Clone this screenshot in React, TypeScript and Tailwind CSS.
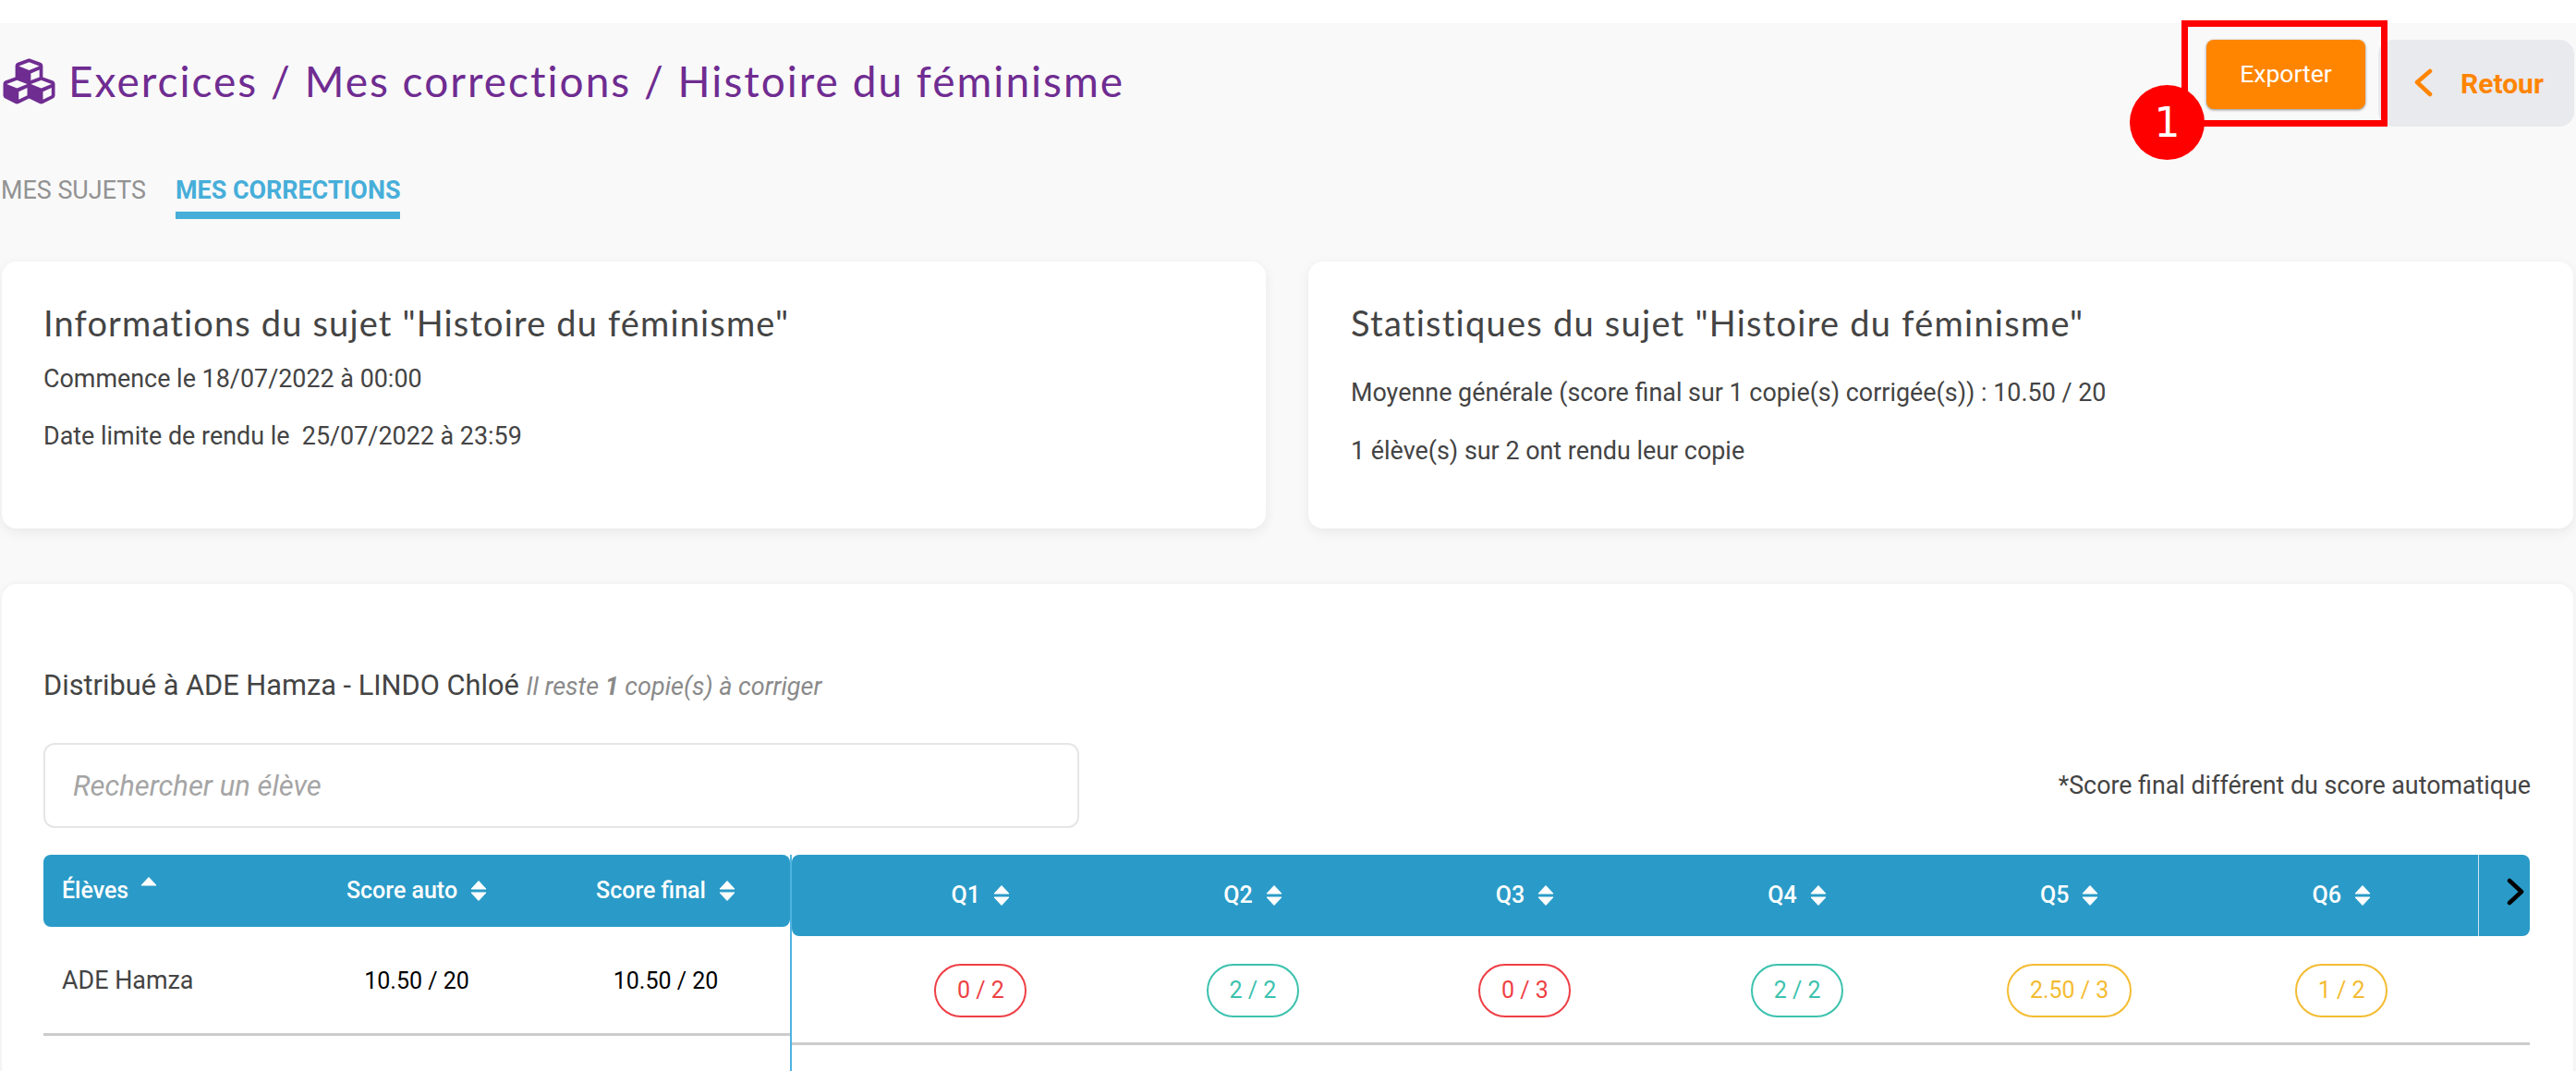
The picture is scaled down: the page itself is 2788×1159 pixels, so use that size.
import { FaCubes } from "react-icons/fa";

// One score badge per question, coloured by result
const questions = [
    { name: "Q1", score: "0 / 2", tone: "border-[#ee3f45] text-[#ee3f45]", width: "w-[100px]" },
    { name: "Q2", score: "2 / 2", tone: "border-[#3cc2ae] text-[#3cc2ae]", width: "w-[100px]" },
    { name: "Q3", score: "0 / 3", tone: "border-[#ee3f45] text-[#ee3f45]", width: "w-[100px]" },
    { name: "Q4", score: "2 / 2", tone: "border-[#3cc2ae] text-[#3cc2ae]", width: "w-[100px]" },
    { name: "Q5", score: "2.50 / 3", tone: "border-[#f4bc32] text-[#f4bc32]", width: "w-[135px]" },
    { name: "Q6", score: "1 / 2", tone: "border-[#f4bc32] text-[#f4bc32]", width: "w-[100px]" },
];

function SortIcon({ onlyUp = false }: { onlyUp?: boolean }) {
    return (
        <svg width="18" height="22" viewBox="0 0 18 22" className="ml-[14px] shrink-0 fill-white">
            <path d="M9 0.5 L17 9 L1 9 Z" stroke="white" strokeWidth="1" strokeLinejoin="round" />
            {!onlyUp && <path d="M1 13 L17 13 L9 21.5 Z" stroke="white" strokeWidth="1" strokeLinejoin="round" />}
        </svg>
    );
}

export default function App() {
    const titleFont = "font-['Lato',sans-serif]";

    return (
        <div className="relative h-[1159px] w-[2788px] overflow-hidden bg-white font-['Roboto',sans-serif] text-[26.9px] text-[#444]">
            <div className="mt-[25px] h-[1134px] bg-[#f9f9f9] pl-[2px] pr-[3px]">
                {/* Title row */}
                <div className="flex h-[135px] items-start justify-between">
                    <div className="mt-[35px] flex items-center">
                        <FaCubes className="-ml-[2px] h-[56px] w-[63px] text-[#6f2c91]" />
                        <h1 className={`ml-[11px] text-[46px] leading-[46px] tracking-[2px] text-[#6f2c91] ${titleFont}`}>
                            Exercices / Mes corrections / Histoire du féminisme
                        </h1>
                    </div>
                    <div className="mt-[18px] -mr-[1px] flex items-start">
                        <button className="flex h-[75px] w-[172px] items-center justify-center rounded-lg bg-[#ff8500] pb-[2px] text-[26.5px] text-white shadow-[0_1px_3px_rgba(0,0,0,0.45)]">
                            Exporter
                        </button>
                        <div className="ml-[14px] flex h-[94px] w-[212px] items-center rounded-2xl bg-[#e9eaee] pl-[38px]">
                            <svg width="22" height="32" viewBox="0 0 22 32" fill="none" stroke="#ff8500" strokeWidth="4.5" strokeLinecap="round" strokeLinejoin="round">
                                <path d="M18 3 L4 15 L18 28" />
                            </svg>
                            <span className="ml-[29px] text-[30px] font-bold text-[#ff8500]">Retour</span>
                        </div>
                    </div>
                </div>

                {/* Tabs */}
                <div className="-ml-[1px] flex h-[123px] items-start gap-[32px] uppercase">
                    <span className="mt-[31px] leading-[30px] text-[#929292]">Mes sujets</span>
                    <span className="mt-[31px] h-[46px] border-b-[8px] border-[#46aed9] leading-[30px] font-bold text-[#46aed9]">Mes corrections</span>
                </div>

                {/* Info cards */}
                <div className="flex gap-[46px]">
                    <div className="h-[289px] w-[1368px] rounded-2xl bg-white px-[45px] pt-[43px] shadow-[0_4px_14px_rgba(0,0,0,0.07)]">
                        <h2 className={`text-[38px] leading-[46px] tracking-[1.15px] ${titleFont}`}>Informations du sujet "Histoire du féminisme"</h2>
                        <p className="mt-[23px] leading-[30px]">Commence le 18/07/2022 à 00:00</p>
                        <p className="mt-[32px] leading-[30px] whitespace-pre">Date limite de rendu le  25/07/2022 à 23:59</p>
                    </div>
                    <div className="h-[289px] w-[1369px] rounded-2xl bg-white px-[46px] pt-[43px] shadow-[0_4px_14px_rgba(0,0,0,0.07)]">
                        <h2 className={`text-[38px] leading-[46px] tracking-[1.25px] ${titleFont}`}>Statistiques du sujet "Histoire du féminisme"</h2>
                        <p className="mt-[38px] leading-[30px]">Moyenne générale (score final sur 1 copie(s) corrigée(s)) : 10.50 / 20</p>
                        <p className="mt-[33px] leading-[30px]">1 élève(s) sur 2 ont rendu leur copie</p>
                    </div>
                </div>

                {/* Results card */}
                <div className="mt-[60px] h-[600px] rounded-2xl bg-white px-[45px] pt-[95px] shadow-[0_0_8px_rgba(0,0,0,0.05)]">
                    <p className="text-[30.75px] leading-[30px]">
                        Distribué à ADE Hamza - LINDO Chloé{" "}
                        <span className="text-[27px] italic text-[#8a8a8a]">
                            Il reste <b>1</b> copie(s) à corriger
                        </span>
                    </p>

                    <div className="mt-[46px] flex items-center justify-between">
                        <input
                            readOnly
                            placeholder="Rechercher un élève"
                            className="h-[92px] w-[1121px] rounded-xl border-2 border-[#e6e6e6] bg-white px-[30px] text-[31px] italic placeholder:text-[#a5a5a5] focus:outline-none"
                        />
                        <span className="mr-[1px] text-[26.8px]">*Score final différent du score automatique</span>
                    </div>

                    {/* Table */}
                    <div className="mt-[29px] flex items-start">
                        <div className="w-[808px] shrink-0">
                            <div className="grid h-[78px] grid-cols-[269px_270px_269px] items-center rounded-lg bg-[#2a9bc8] text-[25px] font-medium text-white">
                                <div className="flex items-center pl-[20px]">
                                    Élèves
                                    <span className="-mt-[8px] -ml-[1px]"><SortIcon onlyUp /></span>
                                </div>
                                <div className="flex items-center justify-center">Score auto<SortIcon /></div>
                                <div className="flex items-center justify-center">Score final<SortIcon /></div>
                            </div>
                            <div className="grid h-[118px] grid-cols-[269px_270px_269px] items-center border-b-[3px] border-[#ccc] pt-[2px]">
                                <div className="pl-[20px]">ADE Hamza</div>
                                <div className="text-center text-[25px] text-black">10.50 / 20</div>
                                <div className="text-center text-[25px] text-black">10.50 / 20</div>
                            </div>
                        </div>
                        <div className="h-[300px] w-[1883px] shrink-0 border-l-2 border-[#4fb3e0]">
                            <div className="flex h-[88px] rounded-lg bg-[#2a9bc8] text-[25px] font-medium text-white">
                                <div className="flex flex-1 pl-[57px]">
                                    {questions.map((q) => (
                                        <div key={q.name} className="flex w-[294.6px] items-center justify-center">
                                            {q.name}
                                            <SortIcon />
                                        </div>
                                    ))}
                                </div>
                                <div className="flex w-[60px] items-start border-l border-[#cfe6f1] pl-[29px] pt-[25px]">
                                    <svg width="22" height="30" viewBox="0 0 22 30" fill="none" stroke="black" strokeWidth="4.5" strokeLinecap="round" strokeLinejoin="round">
                                        <path d="M4 3 L17 15 L4 27" />
                                    </svg>
                                </div>
                            </div>
                            <div className="flex h-[118px] items-center border-b-[3px] border-[#ccc] pl-[57px] pt-[2px]">
                                {questions.map((q) => (
                                    <div key={q.name} className="flex w-[294.6px] justify-center">
                                        <span className={`flex h-[58px] items-center justify-center rounded-[29px] border-2 text-[25px] ${q.tone} ${q.width}`}>
                                            {q.score}
                                        </span>
                                    </div>
                                ))}
                            </div>
                        </div>
                    </div>
                </div>
            </div>

            {/* Red annotation over the export button */}
            <div className="absolute left-[2361px] top-[22px] h-[115px] w-[223px] border-[7px] border-[#ff0000]" />
            <div className="absolute left-[2305px] top-[92px] flex h-[81px] w-[81px] items-center justify-center rounded-full bg-[#ff0000] font-['DejaVu_Sans',sans-serif] text-[44px] text-white">
                1
            </div>
        </div>
    );
}
